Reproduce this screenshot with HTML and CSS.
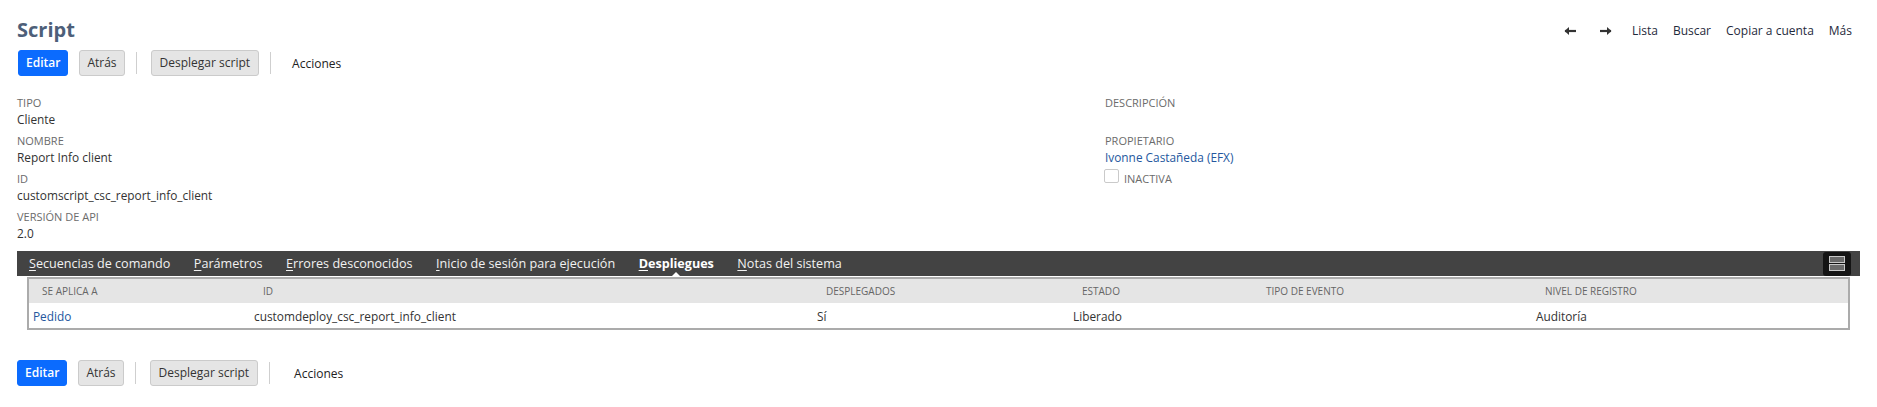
FILE: index.html
```html
<!DOCTYPE html>
<html lang="es">
<head>
<meta charset="utf-8">
<title>Script</title>
<link rel="stylesheet" href="styles.css">
</head>
<body>
<div class="page">
  <header class="head">
    <h1 class="title">Script</h1>
    <nav class="nav">
      <a class="arrow" href="#" aria-label="Anterior"><svg width="12" height="10" viewBox="0 0 12 10"><path d="M1 5H12" stroke="#333" stroke-width="2.2"/><path d="M0.5 5L5 1V9Z" fill="#333"/></svg></a>
      <a class="arrow next" href="#" aria-label="Siguiente"><svg width="12" height="10" viewBox="0 0 12 10"><path d="M0 5H11" stroke="#333" stroke-width="2.2"/><path d="M11.5 5L7 1V9Z" fill="#333"/></svg></a>
      <a class="navlink first" href="#">Lista</a>
      <a class="navlink" href="#">Buscar</a>
      <a class="navlink" href="#">Copiar a cuenta</a>
      <a class="navlink" href="#">Más</a>
    </nav>
  </header>

  <div class="actions">
    <button class="btn primary">Editar</button>
    <button class="btn back">Atrás</button>
    <span class="sep"></span>
    <button class="btn">Desplegar script</button>
    <span class="sep"></span>
    <span class="menu">Acciones</span>
  </div>

  <section class="fields">
    <div class="col">
      <div class="field"><div class="label">Tipo</div><div class="value">Cliente</div></div>
      <div class="field"><div class="label">Nombre</div><div class="value">Report Info client</div></div>
      <div class="field"><div class="label">ID</div><div class="value">customscript_csc_report_info_client</div></div>
      <div class="field"><div class="label">Versión de API</div><div class="value">2.0</div></div>
    </div>
    <div class="col">
      <div class="field"><div class="label">Descripción</div><div class="value"></div></div>
      <div class="field"><div class="label">Propietario</div><div class="value"><a class="link" href="#">Ivonne Castañeda (EFX)</a></div></div>
      <div class="check"><span class="box"></span><span class="label">Inactiva</span></div>
    </div>
  </section>

  <div class="tabbar">
    <div class="tabs">
      <span class="tab"><u>S</u>ecuencias de comando</span>
      <span class="tab"><u>P</u>arámetros</span>
      <span class="tab"><u>E</u>rrores desconocidos</span>
      <span class="tab"><u>I</u>nicio de sesión para ejecución</span>
      <span class="tab active"><u>D</u>espliegues</span>
      <span class="tab"><u>N</u>otas del sistema</span>
    </div>
    <span class="toggle"><svg width="16" height="15" viewBox="0 0 16 15"><rect x="0.5" y="0.5" width="15" height="6" fill="#6a6a6a" stroke="#c8c8c8"/><rect x="0.5" y="8.5" width="15" height="6" fill="#6a6a6a" stroke="#c8c8c8"/></svg></span>
  </div>

  <div class="grid">
    <table>
      <colgroup>
        <col style="width:221px"><col style="width:563px"><col style="width:256px"><col style="width:184px"><col style="width:279px"><col>
      </colgroup>
      <thead>
        <tr><th>Se aplica a</th><th>ID</th><th>Desplegados</th><th>Estado</th><th>Tipo de evento</th><th>Nivel de registro</th></tr>
      </thead>
      <tbody>
        <tr><td><a class="link" href="#">Pedido</a></td><td>customdeploy_csc_report_info_client</td><td>Sí</td><td>Liberado</td><td></td><td>Auditoría</td></tr>
      </tbody>
    </table>
  </div>

  <div class="actions bottom">
    <button class="btn primary">Editar</button>
    <button class="btn back">Atrás</button>
    <span class="sep"></span>
    <button class="btn">Desplegar script</button>
    <span class="sep"></span>
    <span class="menu">Acciones</span>
  </div>
</div>
</body>
</html>
```

FILE: styles.css
```css
* { box-sizing: border-box; }
html, body { margin: 0; background: #fff; }
body {
  font-family: "Open Sans", "Liberation Sans", sans-serif;
  color: #333;
  font-size: 12px;
}
.page { padding: 16px 0 0 17px; }

.head { display: flex; justify-content: space-between; align-items: flex-start; }
.title {
  margin: 0;
  font-size: 20px;
  line-height: 27px;
  font-weight: 700;
  color: #4d5f79;
}
.nav {
  display: flex;
  align-items: center;
  margin-top: 7px;
  padding-right: 25px;
  line-height: 16px;
}
.nav a { color: #1f2a3c; text-decoration: none; font-size: 12px; }
.arrow { display: flex; align-items: center; height: 16px; }
.arrow.next { margin-left: 24px; }
.navlink { margin-left: 15px; }
.navlink.first { margin-left: 20px; }

.actions { display: flex; align-items: center; margin-top: 7px; padding-left: 1px; }
.actions.bottom { margin-top: 30px; padding-left: 0; }
.btn {
  height: 26px;
  padding: 0 8px;
  border: 1px solid #cbcbcb;
  border-radius: 3px;
  background: #e5e5e5;
  color: #333;
  font-family: "Open Sans", "Liberation Sans", sans-serif;
  font-size: 12px;
  font-weight: 400;
  line-height: 24px;
  margin-right: 11px;
}
.btn.back { padding: 0 7px; }
.btn.primary {
  background: #0b6bfe;
  border-color: #0b6bfe;
  color: #fff;
  font-weight: 600;
  padding: 0 7px;
}
.sep { width: 1px; height: 22px; background: #cfcfcf; margin: 0 14px 0 0; }
.menu { margin-left: 7px; font-size: 12px; color: #222; }
.bottom .menu { margin-left: 10px; }

.fields { display: grid; grid-template-columns: 1088px 1fr; margin-top: 20px; }
.field { margin-bottom: 7px; }
.label {
  font-size: 11px;
  line-height: 14px;
  text-transform: uppercase;
  color: #6b6b6b;
  margin-bottom: 1px;
}
.value { font-size: 11.85px; line-height: 16px; min-height: 16px; color: #333; }
.link { color: #24579e; text-decoration: none; }
.check { display: flex; align-items: flex-end; margin-top: -3px; }
.box { width: 15px; height: 14px; border: 1px solid #cacaca; border-radius: 2px; background: #fff; margin-left: -1px; }
.check .label { margin: 0 0 -3px 5px; }

.tabbar {
  display: flex;
  justify-content: space-between;
  align-items: center;
  height: 25px;
  margin-top: 3px;
  margin-right: 17px;
  background: #434343;
}
.tabs { display: flex; height: 25px; }
.tab {
  position: relative;
  padding: 0 11.5px 0 12px;
  font-size: 12.6px;
  line-height: 25px;
  color: #f2f2f2;
}
.tab u { text-decoration-thickness: 1px; text-underline-offset: 2px; }
.tab.active { font-weight: 700; color: #fff; }
.tab.active::after {
  content: "";
  position: absolute;
  left: 50%;
  bottom: 0;
  margin-left: -4px;
  border-left: 4px solid transparent;
  border-right: 4px solid transparent;
  border-bottom: 4px solid #fff;
}
.toggle {
  display: flex;
  align-items: center;
  justify-content: center;
  width: 28px;
  height: 24px;
  margin-right: 9px;
  border-radius: 3px;
  background: #141414;
}

.grid {
  margin: 1px 27px 0 10px;
  border: 2px solid #ababab;
}
table { width: 100%; border-collapse: collapse; table-layout: fixed; }
th {
  height: 24px;
  padding: 0 0 0 13px;
  background: #e5e5e5;
  text-align: left;
  font-size: 10px;
  font-weight: 400;
  text-transform: uppercase;
  color: #666;
}
td {
  height: 25px;
  padding: 0 0 0 4px;
  font-size: 11.85px;
  color: #333;
  background: #fff;
}
```
